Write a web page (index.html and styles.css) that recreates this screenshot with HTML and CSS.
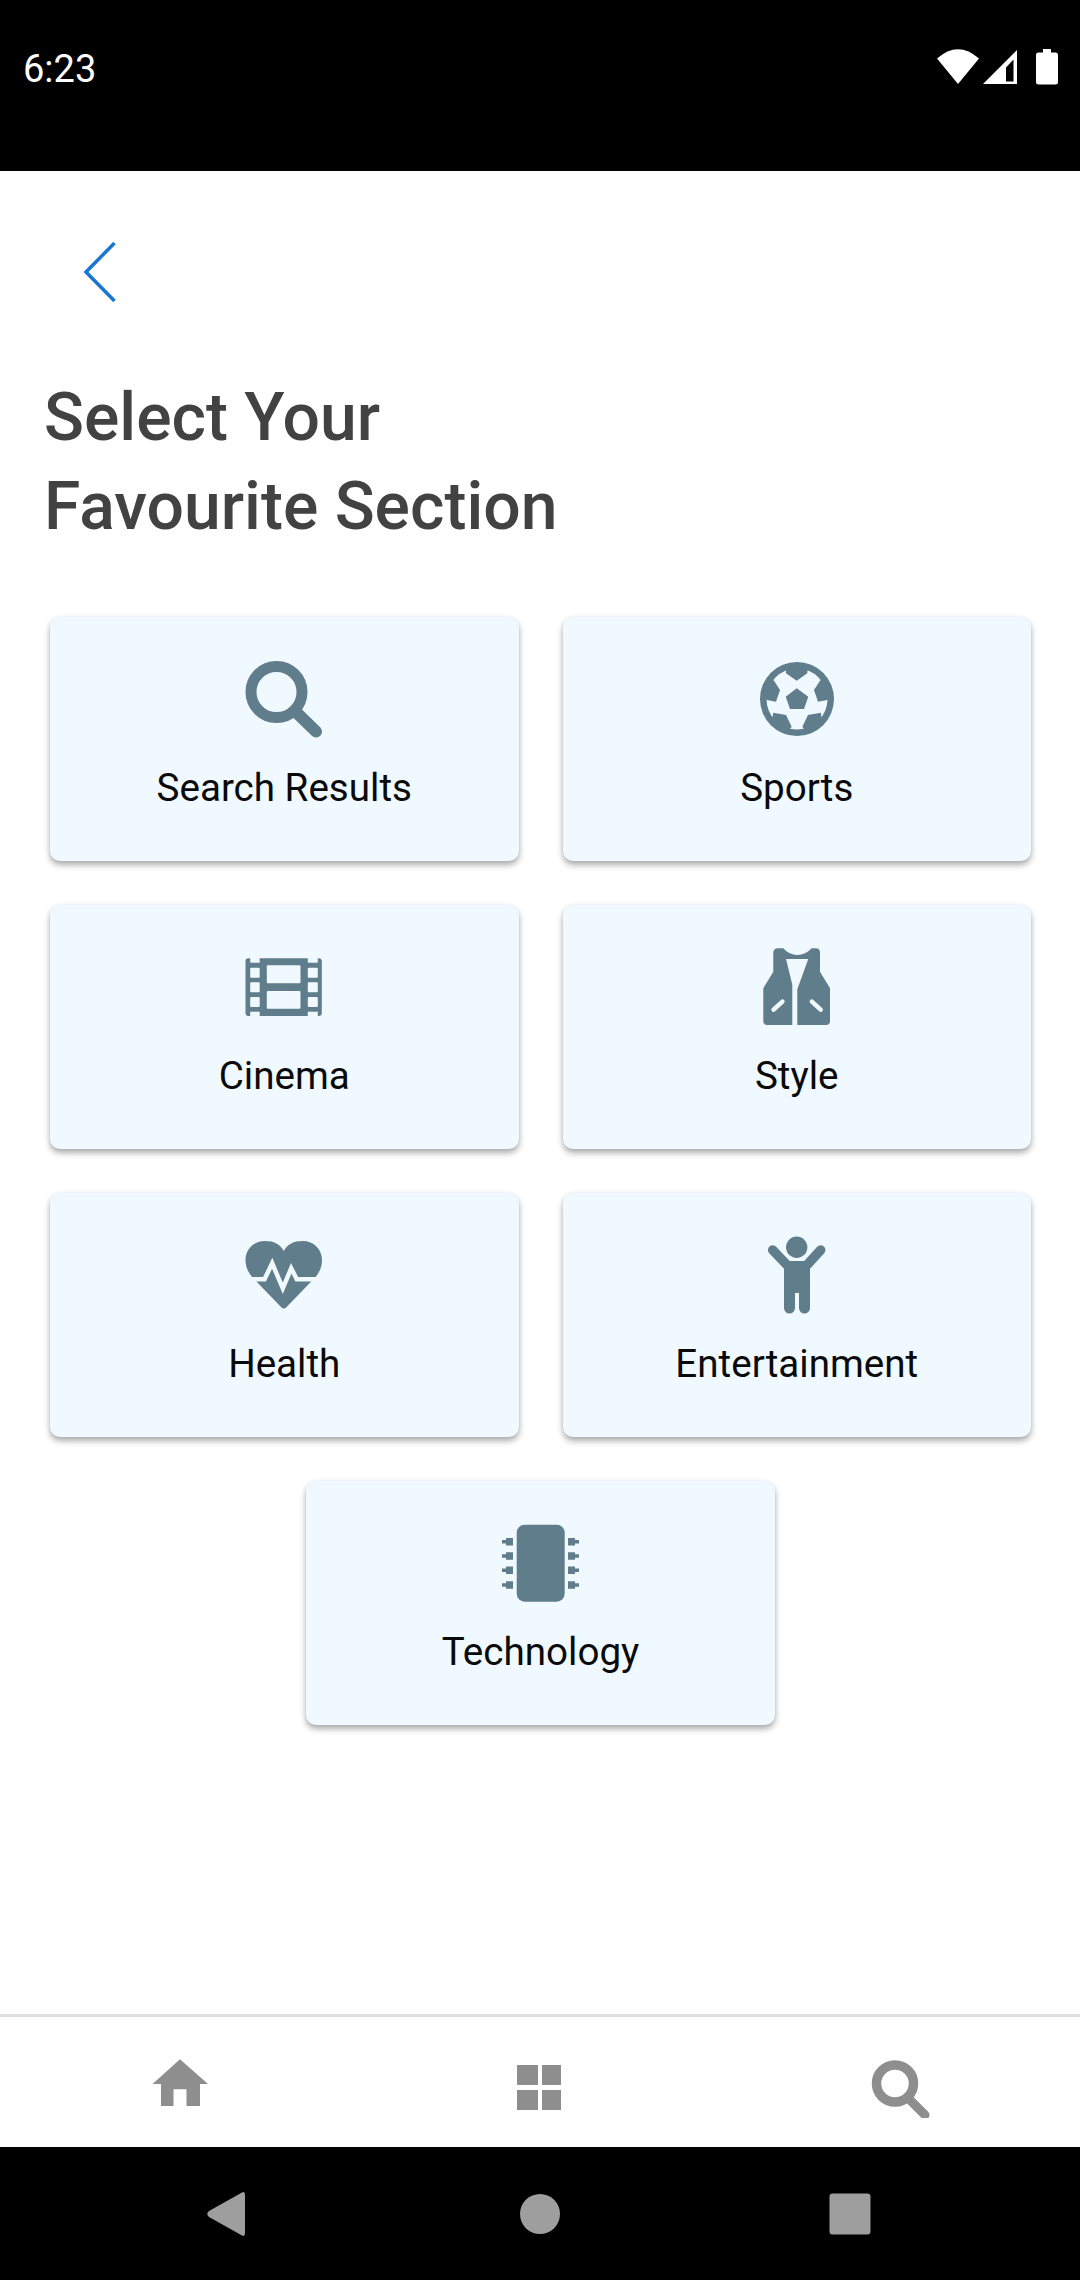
FILE: index.html
```html
<!DOCTYPE html>
<html lang="en">
<head>
<meta charset="utf-8">
<title>Select Your Favourite Section</title>
<link rel="stylesheet" href="styles.css">
</head>
<body>
<div class="phone">
  <header class="status-bar">
    <span class="clock">6:23</span>
    <div class="status-icons">
      <svg class="ico-wifi" viewBox="0 0 42 36"><path d="M0 9.5Q21 -9 42 9.5L21 35Z" fill="#fff"/></svg>
      <svg class="ico-signal" viewBox="0 0 34 36"><path fill-rule="evenodd" d="M0 35L34 1V35ZM30.5 10.5L23 18.5V32.5H30.5Z" fill="#fff"/></svg>
      <svg class="ico-battery" viewBox="0 0 22 36"><path d="M7 0H15V3.5H19.5Q22 3.5 22 6V33Q22 35.5 19.5 35.5H2.5Q0 35.5 0 33V6Q0 3.5 2.5 3.5H7Z" fill="#fff"/></svg>
    </div>
  </header>

  <main class="content">
    <svg class="back" viewBox="0 0 32 60"><path d="M30.5 1L2 30L30.5 59" fill="none" stroke="#1976d2" stroke-width="3.5"/></svg>
    <h1 class="title">Select Your<br>Favourite Section</h1>

    <section class="cards">
      <article class="card">
        <svg class="card-icon" viewBox="0 0 80 80"><circle class="line" cx="32.5" cy="33" r="25.5" stroke-width="11"/><path class="line" d="M54 55L72 72.5" stroke-width="12" stroke-linecap="round"/></svg>
        <span class="card-label">Search Results</span>
      </article>
      <article class="card">
        <svg class="card-icon" viewBox="0 0 80 80">
          <circle class="solid" cx="40" cy="40" r="37"/>
          <circle class="cut" cx="40" cy="40" r="30.5"/>
          <path class="solid" d="M39.7 29.3L51.3 37.7L47 50H33L28.7 37.7Z"/>
          <path class="solid" d="M29 14.3L39.7 21.7L50.3 14.3L51 6H29Z"/>
          <path class="solid" d="M17 21.7L23 31L19 42.7L9.7 41L5 30L12 18Z"/>
          <path class="solid" d="M63 21.7L57 31L61 42.7L70.3 41L75 30L68 18Z"/>
          <path class="solid" d="M16.3 53.7L29 56L34.7 67.7L30 74L14 66Z"/>
          <path class="solid" d="M63.7 53.7L51 56L45.3 67.7L50 74L66 66Z"/>
        </svg>
        <span class="card-label">Sports</span>
      </article>
      <article class="card">
        <svg class="card-icon" viewBox="0 0 80 80">
          <rect class="solid" x="1.5" y="11.3" width="76.3" height="57.7" rx="3"/>
          <rect class="cut" x="6.2" y="11" width="9.5" height="4.7"/><rect class="cut" x="63.8" y="11" width="10" height="4.7"/>
          <rect class="cut" x="6.2" y="20.7" width="9.5" height="10" rx="1"/><rect class="cut" x="63.8" y="20.7" width="10" height="10" rx="1"/>
          <rect class="cut" x="6.2" y="35.3" width="9.5" height="10" rx="1"/><rect class="cut" x="63.8" y="35.3" width="10" height="10" rx="1"/>
          <rect class="cut" x="6.2" y="50" width="9.5" height="10" rx="1"/><rect class="cut" x="63.8" y="50" width="10" height="10" rx="1"/>
          <rect class="cut" x="6.2" y="64.7" width="9.5" height="4.6"/><rect class="cut" x="63.8" y="64.7" width="10" height="4.6"/>
          <rect class="cut" x="22.8" y="18.3" width="33.7" height="18" rx="1"/><rect class="cut" x="22.8" y="44" width="33.7" height="17.7" rx="1"/>
        </svg>
        <span class="card-label">Cinema</span>
      </article>
      <article class="card">
        <svg class="card-icon" viewBox="0 0 80 80">
          <path class="solid" d="M16.3 6Q16.3 1.3 21 1.3H26.3Q32 8 40.3 8Q48.6 8 54.7 1.3H59Q63 1.3 63 6V24.7L73 41.3V74Q73 78 69 78H10.3Q6.3 78 6.3 74V41.3L16.3 24.7Z"/>
          <path class="cut" d="M29 12H51.3L40.3 42.3V78.5H35.3V37.5Z"/>
          <path class="line-cut" d="M16.6 62.7L25.4 54.6M54.9 54.6L63.7 62.7" stroke-width="4.5" stroke-linecap="round"/>
        </svg>
        <span class="card-label">Style</span>
      </article>
      <article class="card">
        <svg class="card-icon" viewBox="0 0 80 80">
          <path class="solid" d="M39.8 16C36 9 30 6 21 6C10 6 1.5 14 1.5 25C1.5 32 4 37 8 42L37 72Q39.8 75 42.6 72L71.6 42C75.6 37 78 32 78 25C78 14 69.6 6 58.6 6C49.6 6 43.6 9 39.8 16Z"/>
          <path class="line-cut" d="M2 44.3H20.5L28.2 28.3L38.8 53.3L47.2 33.3L52.8 44.3H78" stroke-width="4.5"/>
        </svg>
        <span class="card-label">Health</span>
      </article>
      <article class="card">
        <svg class="card-icon" viewBox="0 0 80 80">
          <circle class="solid" cx="39.7" cy="12.3" r="10.7"/>
          <path class="line" d="M15.7 15L30 30M63.7 15L50 30" stroke-width="9.5" stroke-linecap="round"/>
          <rect class="solid" x="27" y="26" width="26" height="32" rx="3"/>
          <rect class="solid" x="27" y="45" width="11" height="33.5" rx="5.5"/>
          <rect class="solid" x="42" y="45" width="11" height="33.5" rx="5.5"/>
        </svg>
        <span class="card-label">Entertainment</span>
      </article>
      <article class="card">
        <svg class="card-icon" viewBox="1 0 80 80">
          <rect class="solid" x="16.7" y="1.7" width="48" height="77" rx="8"/>
          <path class="solid" d="M6 15H13V22.4H6V20.5H2V17H6ZM6 29.3H13V36.7H6V34.8H2V31.3H6ZM6 43.6H13V51H6V49.1H2V45.6H6ZM6 58.3H13V65.7H6V63.8H2V60.3H6Z"/>
          <path class="solid" d="M75 15H68V22.4H75V20.5H79V17H75ZM75 29.3H68V36.7H75V34.8H79V31.3H75ZM75 43.6H68V51H75V49.1H79V45.6H75ZM75 58.3H68V65.7H75V63.8H79V60.3H75Z"/>
        </svg>
        <span class="card-label">Technology</span>
      </article>
    </section>
  </main>

  <nav class="tab-bar">
    <svg class="tab-icon" viewBox="0 0 60 60"><path class="tab-fill" d="M30 1.3L58 26H50V48H36.5V31.3H23.5V48H11V26H2.5Z"/></svg>
    <svg class="tab-icon" viewBox="0 0 60 60"><path class="tab-fill" d="M7 7H28V27H7ZM32 7H51V27H32ZM7 32H28V52H7ZM32 32H51V52H32Z"/></svg>
    <svg class="tab-icon" viewBox="0 0 60 60"><circle class="tab-line" cx="25" cy="25.5" r="18.5" stroke-width="9.5"/><path class="tab-line" d="M38 40L55 57" stroke-width="9" stroke-linecap="round"/></svg>
  </nav>

  <footer class="system-bar">
    <svg class="sys-icon" viewBox="0 0 60 60"><path class="sys-fill" d="M52 8.5Q55 7 55 11V49Q55 53 52 51.5L19 33Q15.5 30 19 27Z"/></svg>
    <svg class="sys-icon" viewBox="0 0 60 60"><circle class="sys-fill" cx="30" cy="30" r="20"/></svg>
    <svg class="sys-icon" viewBox="0 0 60 60"><rect class="sys-fill" x="9.5" y="9.5" width="41" height="41" rx="3"/></svg>
  </footer>
</div>
</body>
</html>
```

FILE: styles.css
```css
* {
  box-sizing: border-box;
}

html,
body {
  margin: 0;
  background: #fff;
}

.phone {
  display: flex;
  flex-direction: column;
  width: 1080px;
  height: 2280px;
  font-family: Roboto, "Liberation Sans", sans-serif;
}

.status-bar {
  display: flex;
  justify-content: space-between;
  align-items: flex-start;
  flex: 0 0 171px;
  padding: 49px 22px 0 23px;
  background: #000;
  color: #fff;
}

.clock {
  margin-top: 1px;
  font-size: 38px;
  line-height: 38px;
}

.status-icons {
  display: flex;
  align-items: flex-start;
}

.status-icons svg {
  display: block;
  height: 36px;
}

.ico-wifi {
  width: 42px;
}

.ico-signal {
  width: 34px;
  margin-left: 4px;
}

.ico-battery {
  width: 22px;
  margin-left: 19px;
}

.content {
  flex: 1;
  display: flex;
  flex-direction: column;
}

.back {
  display: block;
  width: 32px;
  height: 60px;
  margin: 71px 0 0 84px;
}

.title {
  margin: 70.5px 0 66.5px 44px;
  font-size: 66px;
  font-weight: 500;
  line-height: 89px;
  color: #424242;
}

.cards {
  display: flex;
  flex-wrap: wrap;
  justify-content: center;
  gap: 44px 44px;
  padding-left: 1px;
}

.card {
  display: flex;
  flex-direction: column;
  align-items: center;
  width: 468.5px;
  height: 244px;
  padding-top: 42px;
  border-radius: 10px;
  background: #eff9ff;
  box-shadow: 0 4px 6px rgba(0, 0, 0, 0.32), 0 0 5px rgba(0, 0, 0, 0.05);
}

.card-icon {
  display: block;
  flex: none;
  width: 80px;
  height: 80px;
}

.card-label {
  margin-top: 27px;
  font-size: 38.6px;
  line-height: 44px;
  color: #0a0a0a;
}

.solid {
  fill: #607d8b;
}

.cut {
  fill: #eff9ff;
}

.line {
  fill: none;
  stroke: #607d8b;
}

.line-cut {
  fill: none;
  stroke: #eff9ff;
}

.tab-bar {
  display: grid;
  grid-template-columns: repeat(3, 1fr);
  justify-items: center;
  flex: 0 0 133px;
  padding-top: 41px;
  border-top: 3px solid #e0e0e0;
  background: #fff;
}

.tab-icon {
  display: block;
  width: 60px;
  height: 60px;
}

.tab-fill {
  fill: #8e8e8e;
}

.tab-line {
  fill: none;
  stroke: #8e8e8e;
}

.system-bar {
  display: flex;
  flex: 0 0 133px;
  padding-top: 37px;
  background: #000;
}

.sys-icon {
  display: block;
  width: 60px;
  height: 60px;
}

.sys-icon:nth-child(1) {
  margin-left: 190px;
}

.sys-icon:nth-child(2) {
  margin-left: 260px;
}

.sys-icon:nth-child(3) {
  margin-left: 250px;
}

.sys-fill {
  fill: #9e9e9e;
}
```
